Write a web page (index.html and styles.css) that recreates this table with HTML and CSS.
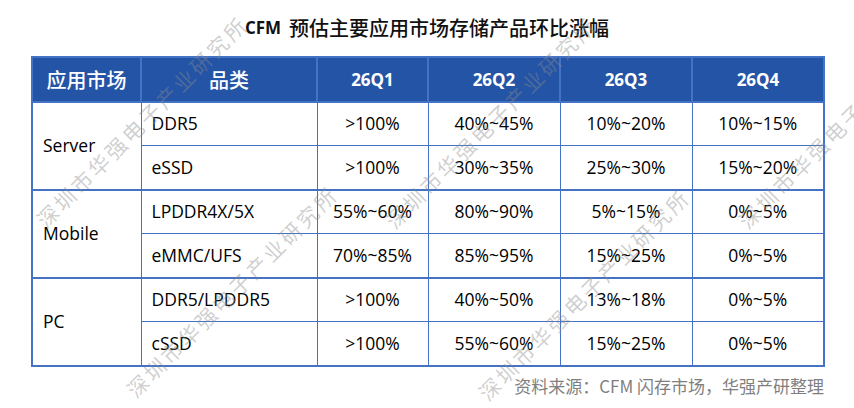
FILE: index.html
```html
<!DOCTYPE html>
<html lang="zh-CN">
<head>
<meta charset="utf-8">
<title>CFM 预估主要应用市场存储产品环比涨幅</title>
<link rel="stylesheet" href="styles.css">
</head>
<body>
<div class="page">
  <h1 class="title"><b class="title-latin">CFM</b><span class="title-cjk">预估主要应用市场存储产品环比涨幅</span></h1>
  <table class="grid">
    <colgroup>
      <col class="w-market"><col class="w-cat"><col class="w-q1"><col class="w-q"><col class="w-q"><col class="w-q">
    </colgroup>
    <thead>
      <tr>
        <th class="cjk">应用市场</th>
        <th class="cjk">品类</th>
        <th>26Q1</th>
        <th>26Q2</th>
        <th>26Q3</th>
        <th>26Q4</th>
      </tr>
    </thead>
    <tbody class="group">
      <tr>
        <td rowspan="2" class="market">Server</td>
        <td class="cat">DDR5</td>
        <td>&gt;100%</td><td>40%~45%</td><td>10%~20%</td><td>10%~15%</td>
      </tr>
      <tr>
        <td class="cat">eSSD</td>
        <td>&gt;100%</td><td>30%~35%</td><td>25%~30%</td><td>15%~20%</td>
      </tr>
    </tbody>
    <tbody class="group">
      <tr>
        <td rowspan="2" class="market">Mobile</td>
        <td class="cat">LPDDR4X/5X</td>
        <td>55%~60%</td><td>80%~90%</td><td>5%~15%</td><td>0%~5%</td>
      </tr>
      <tr>
        <td class="cat">eMMC/UFS</td>
        <td>70%~85%</td><td>85%~95%</td><td>15%~25%</td><td>0%~5%</td>
      </tr>
    </tbody>
    <tbody class="group">
      <tr>
        <td rowspan="2" class="market">PC</td>
        <td class="cat">DDR5/LPDDR5</td>
        <td>&gt;100%</td><td>40%~50%</td><td>13%~18%</td><td>0%~5%</td>
      </tr>
      <tr>
        <td class="cat">cSSD</td>
        <td>&gt;100%</td><td>55%~60%</td><td>15%~25%</td><td>0%~5%</td>
      </tr>
    </tbody>
  </table>
  <p class="source">资料来源：CFM 闪存市场，华强产研整理</p>

  <div class="wm wm-b">深圳市华强电子产业研究所</div>
  <div class="wm wm-c">深圳市华强电子产业研究所</div>
  <div class="wm wm-a">深圳市华强电子产业研究所</div>
  <div class="wm wm-e">深圳市华强电子产业研究所</div>
  <div class="wm wm-d">深圳市华强电子产业研究所</div>
</div>
</body>
</html>
```

FILE: styles.css
```css
html, body {
  margin: 0;
  padding: 0;
  background: #ffffff;
}

.page {
  position: relative;
  width: 854px;
  height: 408px;
  overflow: hidden;
  font-family: "Open Sans", "Noto Sans CJK SC", sans-serif;
  color: #000000;
}

.title {
  margin: 0;
  height: 56px;
  display: flex;
  align-items: center;
  justify-content: center;
  gap: 8px;
  padding-bottom: 2px;
  box-sizing: border-box;
  font-family: "Noto Sans CJK SC", sans-serif;
  font-size: 20px;
  font-weight: 500;
  color: #111111;
}

.title-latin {
  font-family: "Open Sans", sans-serif;
  font-weight: 700;
  font-size: 17px;
}

.grid {
  margin-left: 31px;
  border-collapse: collapse;
  border: 2px solid #4472c4;
  table-layout: fixed;
  width: 793px;
}

.w-market { width: 109px; }
.w-cat { width: 176px; }
.w-q1 { width: 111px; }
.w-q { width: 132px; }

.grid th {
  background: #2454a6;
  color: #ffffff;
  font-family: "Open Sans", "Noto Sans CJK SC", sans-serif;
  font-weight: 700;
  font-size: 17px;
  height: 42.5px;
  padding: 0;
  border: 2px solid #4472c4;
  text-align: center;
}

.grid th.cjk {
  font-family: "Noto Sans CJK SC", sans-serif;
  font-weight: 500;
  font-size: 20px;
}

.grid td {
  height: 42.5px;
  padding: 0;
  border: 1px solid #4472c4;
  text-align: center;
  font-size: 17.5px;
  line-height: 1;
}

.grid .group {
  border-top: 2px solid #4472c4;
}

.grid td.market,
.grid td.cat {
  text-align: left;
  padding-left: 10px;
}

.source {
  margin: 9px 30px 0 0;
  text-align: right;
  font-family: "Noto Sans CJK SC", sans-serif;
  font-size: 17px;
  color: #7f7f7f;
  line-height: 20px;
}

.wm {
  position: absolute;
  white-space: nowrap;
  font-family: "Noto Sans CJK SC", sans-serif;
  font-size: 21px;
  line-height: 20px;
  letter-spacing: 3px;
  color: rgba(140, 140, 140, 0.42);
  transform-origin: 0 50%;
  transform: rotate(-45deg);
  pointer-events: none;
}

.wm-b { left: 40px; top: 213px; }
.wm-c { left: 389px; top: 214px; }
.wm-d { left: 742px; top: 214px; }
.wm-a { left: 130px; top: 383px; }
.wm-e { left: 482px; top: 386px; }
```
